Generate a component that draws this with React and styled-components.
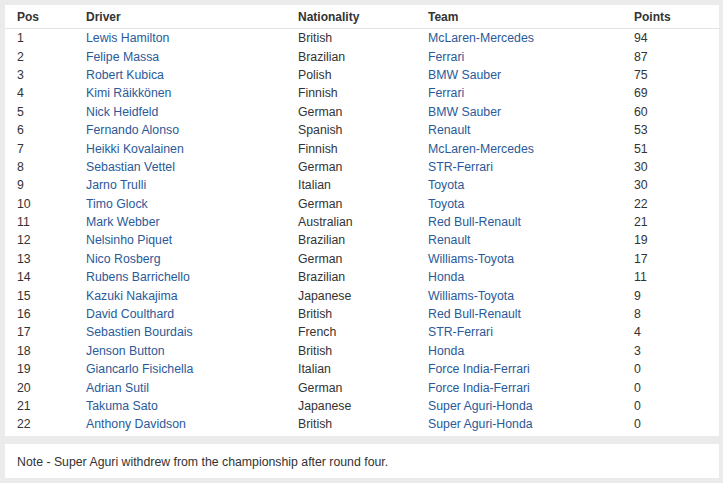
import React from 'react';
import styled, { createGlobalStyle } from 'styled-components';

const GlobalStyle = createGlobalStyle`
  html, body {
    margin: 0;
    padding: 0;
    background: #ebebeb;
  }
  body {
    font-family: "Liberation Sans", Arial, sans-serif;
    font-size: 12.3px;
    color: #333;
  }
`;

const Page = styled.div`
  width: 723px;
  height: 483px;
  box-sizing: border-box;
  padding: 5px 4px 5px 5px;
  display: flex;
  flex-direction: column;
  gap: 8px;
`;

const Panel = styled.div`
  background: #fff;
  padding-bottom: 2px;
`;

const Table = styled.table`
  width: 100%;
  border-collapse: collapse;
  table-layout: fixed;
`;

const HeadCell = styled.th`
  height: 23px;
  padding: 0 0 0 12px;
  text-align: left;
  font-size: 12px;
  font-weight: bold;
  color: #333;
  border-bottom: 1px solid #e3e3e3;
`;

const Cell = styled.td`
  height: 18.4px;
  padding: 0 0 0 12px;
  color: #333;
  white-space: nowrap;
`;

const LinkText = styled.a`
  color: #2a5a99;
  text-decoration: none;
`;

const Note = styled.div`
  height: 34px;
  box-sizing: border-box;
  display: flex;
  align-items: center;
  padding: 3px 12px 0;
  background: #fff;
  color: #333;
`;

const drivers = [
  ['1', 'Lewis Hamilton', 'British', 'McLaren-Mercedes', '94'],
  ['2', 'Felipe Massa', 'Brazilian', 'Ferrari', '87'],
  ['3', 'Robert Kubica', 'Polish', 'BMW Sauber', '75'],
  ['4', 'Kimi Räikkönen', 'Finnish', 'Ferrari', '69'],
  ['5', 'Nick Heidfeld', 'German', 'BMW Sauber', '60'],
  ['6', 'Fernando Alonso', 'Spanish', 'Renault', '53'],
  ['7', 'Heikki Kovalainen', 'Finnish', 'McLaren-Mercedes', '51'],
  ['8', 'Sebastian Vettel', 'German', 'STR-Ferrari', '30'],
  ['9', 'Jarno Trulli', 'Italian', 'Toyota', '30'],
  ['10', 'Timo Glock', 'German', 'Toyota', '22'],
  ['11', 'Mark Webber', 'Australian', 'Red Bull-Renault', '21'],
  ['12', 'Nelsinho Piquet', 'Brazilian', 'Renault', '19'],
  ['13', 'Nico Rosberg', 'German', 'Williams-Toyota', '17'],
  ['14', 'Rubens Barrichello', 'Brazilian', 'Honda', '11'],
  ['15', 'Kazuki Nakajima', 'Japanese', 'Williams-Toyota', '9'],
  ['16', 'David Coulthard', 'British', 'Red Bull-Renault', '8'],
  ['17', 'Sebastien Bourdais', 'French', 'STR-Ferrari', '4'],
  ['18', 'Jenson Button', 'British', 'Honda', '3'],
  ['19', 'Giancarlo Fisichella', 'Italian', 'Force India-Ferrari', '0'],
  ['20', 'Adrian Sutil', 'German', 'Force India-Ferrari', '0'],
  ['21', 'Takuma Sato', 'Japanese', 'Super Aguri-Honda', '0'],
  ['22', 'Anthony Davidson', 'British', 'Super Aguri-Honda', '0'],
];

export default function App() {
  return (
    <>
      <GlobalStyle />
      <Page>
        <Panel>
          <Table>
            <colgroup>
              <col style={{ width: 69 }} />
              <col style={{ width: 212 }} />
              <col style={{ width: 130 }} />
              <col style={{ width: 206 }} />
              <col />
            </colgroup>
            <thead>
              <tr>
                <HeadCell>Pos</HeadCell>
                <HeadCell>Driver</HeadCell>
                <HeadCell>Nationality</HeadCell>
                <HeadCell>Team</HeadCell>
                <HeadCell>Points</HeadCell>
              </tr>
            </thead>
            <tbody>
              {drivers.map(([pos, name, nat, team, pts]) => (
                <tr key={pos}>
                  <Cell>{pos}</Cell>
                  <Cell><LinkText href="#">{name}</LinkText></Cell>
                  <Cell>{nat}</Cell>
                  <Cell><LinkText href="#">{team}</LinkText></Cell>
                  <Cell>{pts}</Cell>
                </tr>
              ))}
            </tbody>
          </Table>
        </Panel>
        <Note>Note - Super Aguri withdrew from the championship after round four.</Note>
      </Page>
    </>
  );
}
